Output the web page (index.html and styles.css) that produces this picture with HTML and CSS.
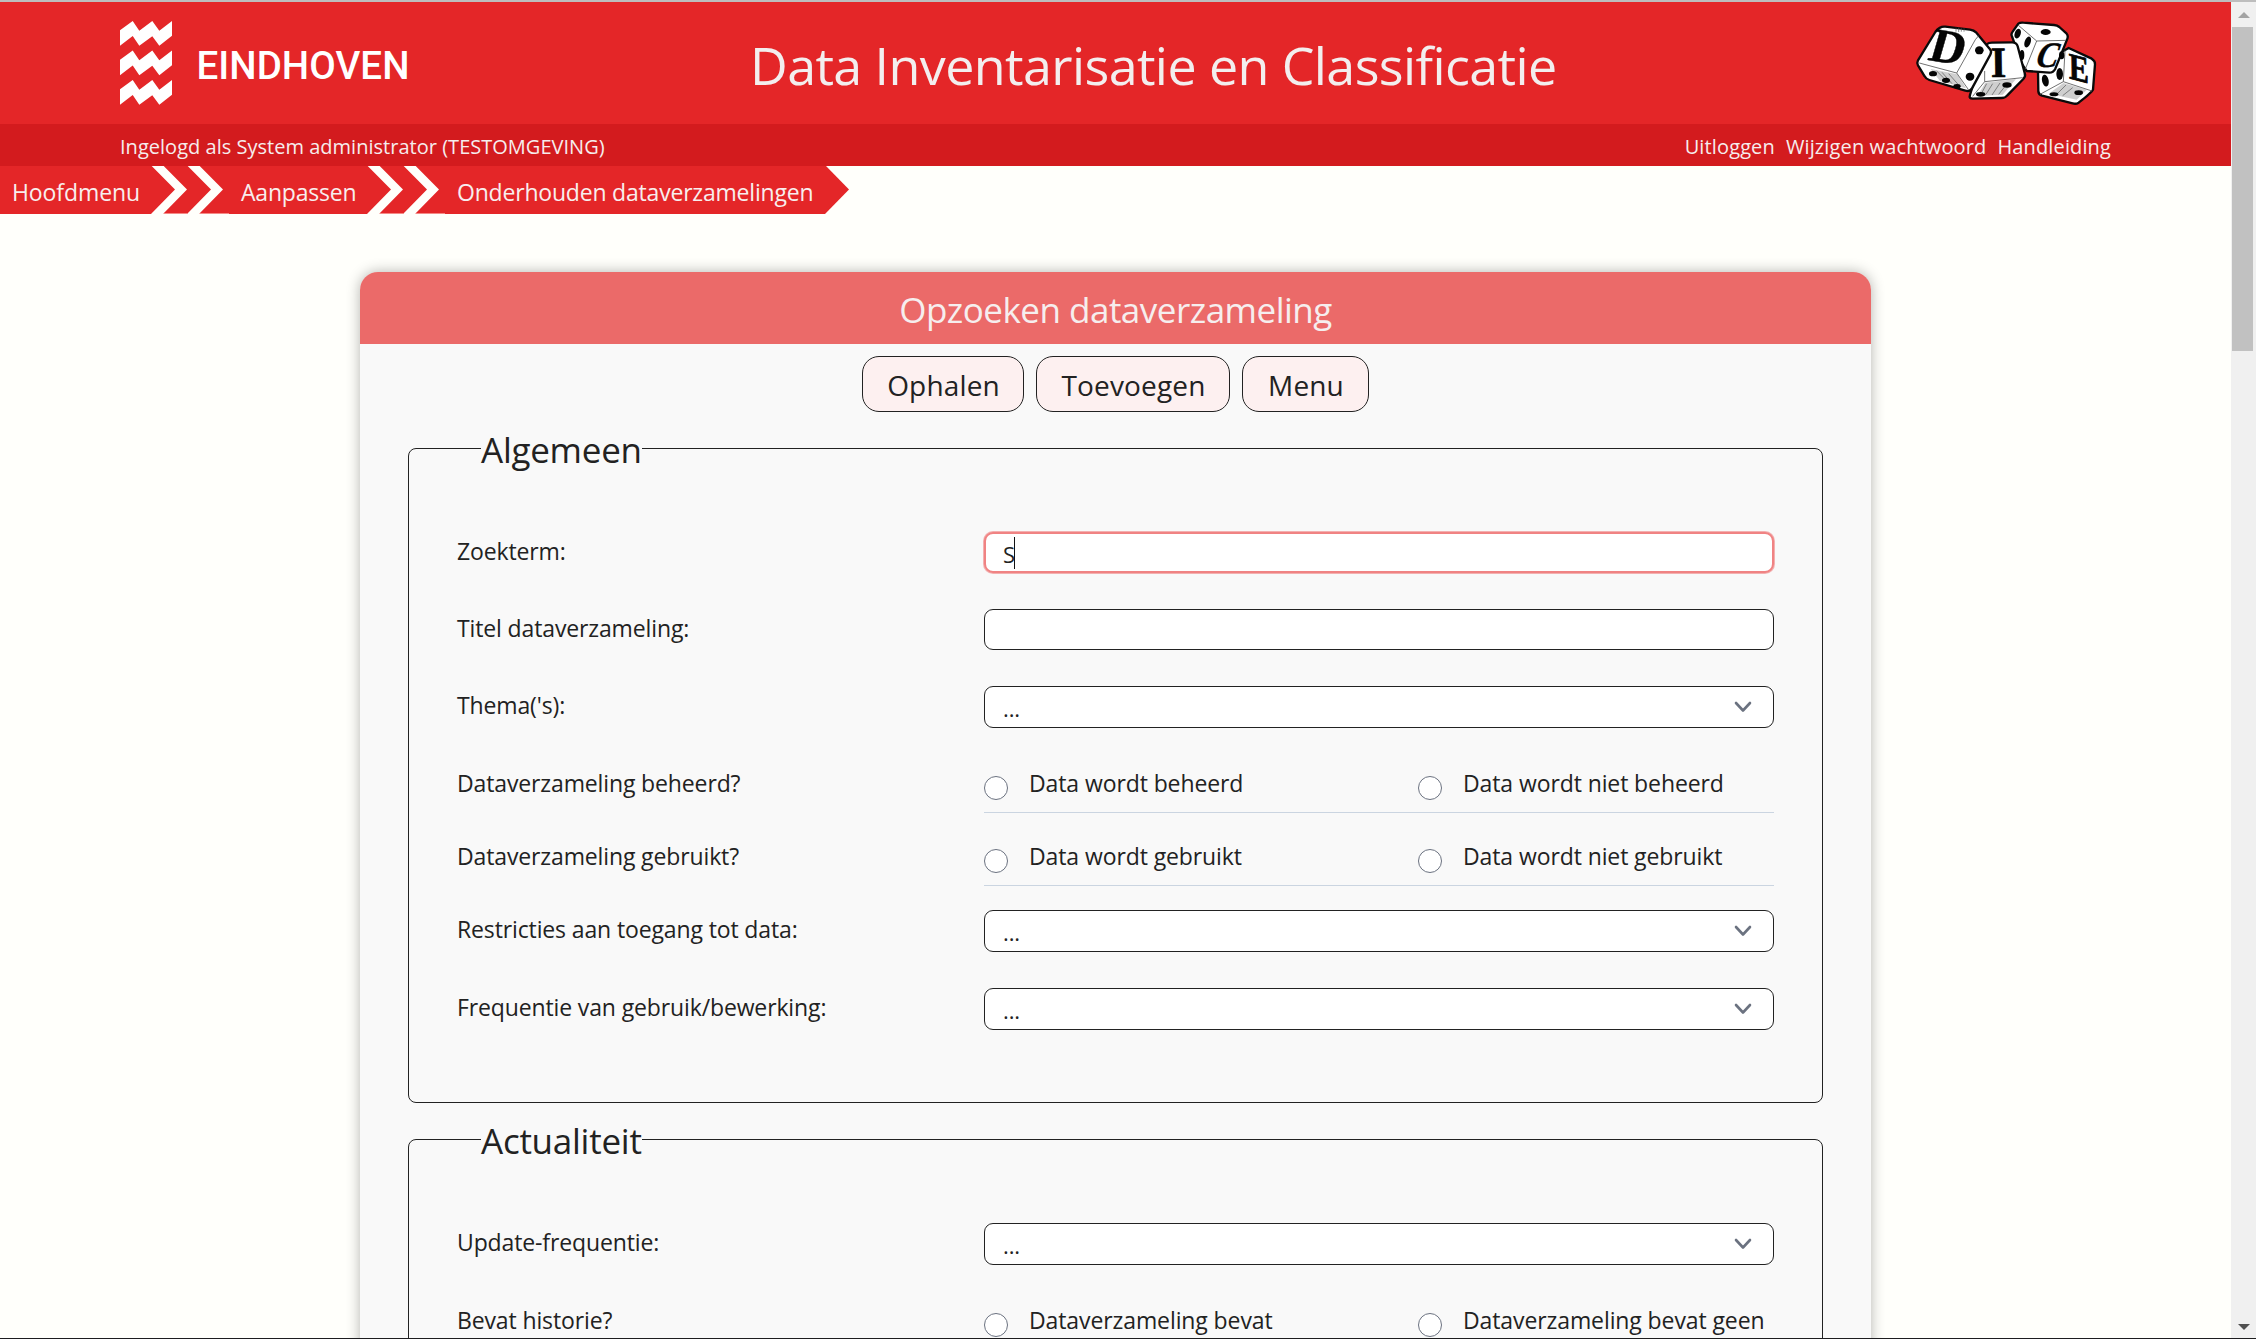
FILE: index.html
```
<!DOCTYPE html>
<html lang="nl">
<head>
<meta charset="utf-8">
<title>Data Inventarisatie en Classificatie</title>
<link rel="stylesheet" href="styles.css">
</head>
<body>
<div class="viewport">
  <div class="page">
    <header class="banner">
      <svg class="logo" width="310" height="122" viewBox="0 2 310 122">
        <defs><path id="wave" d="M0 30.3 12.7 21 19.3 30.7 32.3 21 39.3 30.7 52 21V35.700L39.300 45.700 32.300 36.300 19.300 45.700 12.700 36 0 45.700z"/></defs>
        <g fill="#fff">
          <use href="#wave"/><use href="#wave" y="29.500"/><use href="#wave" y="59"/>
          <text x="76.500" y="79.300" class="logo-text" textLength="213" lengthAdjust="spacing">EINDHOVEN</text>
        </g>
      </svg>
      <h1 class="title">Data Inventarisatie en Classificatie</h1>
      <svg class="dice" width="194" height="94" viewBox="60 50 582 282" stroke-linejoin="round">
        <g fill="#fff" stroke="#0a0a0a" stroke-width="7">
          <path d="M536 143 605 175Q616 182 615 192L609 268Q606 276 566 307 558 312 548 309L456 286Q446 283 445 274L444 215 505 160z"/>
          <path d="M385 70Q390 66 400 67L492 74Q502 75 508 80L530 100Q536 107 531 118L496 205Q490 217 478 217L410 212 395 190 366 108Q362 102 368 94z"/>
          <path d="M290 132Q296 127 306 127L366 126Q380 126 383 138L404 218Q408 228 400 236L352 285Q346 293 334 293L248 295Q236 295 240 284L262 210z"/>
          <path d="M150 82Q156 78 166 79L240 88Q252 90 258 96L300 147Q306 154 301 163L246 264Q240 275 226 271L118 239Q108 236 104 228L84 195Q80 188 84 180L136 95Q142 86 150 82z"/>
        </g>
        <g fill="#cfcfcf">
          <path d="M122 206 202 222 228 264 150 242z"/><path d="M286 247 378 236 338 283 262 287z"/><path d="M520 248 590 268 560 298 476 280z"/>
        </g>
        <g fill="none" stroke="#555" stroke-width="2.500">
          <path d="M88 188 200 218 234 266M200 218 256 118"/>
          <path d="M256 118 266 106M248 288 284 244 398 232M284 244V212"/>
          <path d="M384 74 440 122 528 120M440 122 406 206"/>
          <path d="M525 150 520 244 606 272M520 244 450 282"/>
          <path d="M198 82v12M206 82v13M214 84v10M222 84v10M140 212l34 34M156 216l30 34M176 220l30 34M290 250l-16 30M308 250l-20 32M330 248l-24 36M350 252l-24 30M528 254l-26 26M548 262l-30 24" stroke-width="2"/>
        </g>
        <g fill="#050505">
          <ellipse cx="268" cy="150" rx="13" ry="12"/><ellipse cx="240" cy="229" rx="13" ry="12"/>
          <ellipse cx="129" cy="220" rx="12" ry="8"/><ellipse cx="168" cy="240" rx="12" ry="8"/><ellipse cx="201" cy="258" rx="11" ry="7"/>
          <ellipse cx="272" cy="282" rx="14" ry="7"/><ellipse cx="351" cy="254" rx="14" ry="8"/>
          <ellipse cx="467" cy="95" rx="15" ry="9"/><ellipse cx="383" cy="100" rx="9" ry="15" transform="rotate(20 383 100)"/><ellipse cx="413" cy="125" rx="9" ry="17" transform="rotate(20 413 125)"/><ellipse cx="396" cy="164" rx="7" ry="15"/>
          <ellipse cx="466" cy="241" rx="10" ry="18" transform="rotate(-12 466 241)"/><ellipse cx="509" cy="221" rx="10" ry="18"/><ellipse cx="515" cy="165" rx="8" ry="12"/>
          <ellipse cx="492" cy="282" rx="13" ry="6"/><ellipse cx="566" cy="277" rx="13" ry="7"/>
        </g>
        <g class="dice-letter" fill="#050505" stroke="#050505">
          <text transform="matrix(1.280 .2 -.36 1.250 110 178)" font-size="112">D</text>
          <text transform="matrix(1 0 .02 1.100 303 230)" font-size="118" stroke-width="2">I</text>
          <text transform="matrix(1 0 -.38 1.120 430 200)" font-size="96">C</text>
          <text transform="matrix(.92 .24 .02 1.150 537 234)" font-size="98" stroke-width="2">E</text>
        </g>
      </svg>
    </header>
    <div class="userbar">
      <span class="user">Ingelogd als System administrator (TESTOMGEVING)</span>
      <nav class="links"><a>Uitloggen</a><a>Wijzigen wachtwoord</a><a>Handleiding</a></nav>
    </div>
    <nav class="crumbs">
      <a class="crumb first">Hoofdmenu</a>
      <svg class="sep" width="78" height="48" viewBox="0 0 78 48"><path fill="#e42628" d="M0 0h78v48H0z"/><path fill="#f58a86" d="M12 47h24v1H12zM48 47h30v1H48z"/><path id="chev" fill="#fffffb" d="M.7 0h12L36 23.500 12 48H0L24 23.500z"/><use href="#chev" x="36"/></svg>
      <a class="crumb second">Aanpassen</a>
      <svg class="sep" width="78" height="48" viewBox="0 0 78 48"><path fill="#e42628" d="M0 0h78v48H0z"/><path fill="#f58a86" d="M12 47h24v1H12zM48 47h30v1H48z"/><use href="#chev"/><use href="#chev" x="36"/></svg>
      <a class="crumb third">Onderhouden dataverzamelingen</a>
      <svg class="sep" width="24" height="48" viewBox="0 0 24 48"><path fill="#e42628" d="M0 0h1L24 23.500 0 48z"/></svg>
    </nav>

    <main class="card">
      <h2 class="card-head">Opzoeken dataverzameling</h2>
      <div class="buttons">
        <button class="btn b1">Ophalen</button><button class="btn b2">Toevoegen</button><button class="btn b3">Menu</button>
      </div>
      <fieldset class="group general">
        <legend>Algemeen</legend>
        <div class="row"><label>Zoekterm:</label><div class="field focus">S<i class="caret"></i></div></div>
        <div class="row"><label>Titel dataverzameling:</label><div class="field"></div></div>
        <div class="row"><label>Thema('s):</label><div class="field select">...<svg width="18" height="12" viewBox="0 0 18 12"><path d="M2 2l7 7.500L16 2"/></svg></div></div>
        <div class="row radios"><label>Dataverzameling beheerd?</label><div class="options"><span class="opt"><i class="dot"></i>Data wordt beheerd</span><span class="opt"><i class="dot"></i>Data wordt niet beheerd</span></div></div>
        <div class="row radios"><label>Dataverzameling gebruikt?</label><div class="options"><span class="opt"><i class="dot"></i>Data wordt gebruikt</span><span class="opt"><i class="dot"></i>Data wordt niet gebruikt</span></div></div>
        <div class="row after"><label>Restricties aan toegang tot data:</label><div class="field select">...<svg width="18" height="12" viewBox="0 0 18 12"><path d="M2 2l7 7.500L16 2"/></svg></div></div>
        <div class="row"><label>Frequentie van gebruik/bewerking:</label><div class="field select">...<svg width="18" height="12" viewBox="0 0 18 12"><path d="M2 2l7 7.500L16 2"/></svg></div></div>
      </fieldset>
      <fieldset class="group actual">
        <legend>Actualiteit</legend>
        <div class="row"><label>Update-frequentie:</label><div class="field select">...<svg width="18" height="12" viewBox="0 0 18 12"><path d="M2 2l7 7.500L16 2"/></svg></div></div>
        <div class="row radios"><label>Bevat historie?</label><div class="options"><span class="opt"><i class="dot"></i>Dataverzameling bevat</span><span class="opt"><i class="dot"></i>Dataverzameling bevat geen</span></div></div>
      </fieldset>
    </main>
  </div>
  <div class="scrollbar">
    <svg width="12" height="6" viewBox="0 0 12 6"><path fill="#a3a3a3" d="M6 0l6 6H0z"/></svg>
    <div class="thumb"></div>
    <svg class="down" width="12" height="6" viewBox="0 0 12 6"><path fill="#505050" d="M0 0h12L6 6z"/></svg>
  </div>
</div>
</body>
</html>
```
FILE: styles.css
```
* { box-sizing: border-box; }
body { margin: 0; background: #fffffb; color: #222; font-family: "Open Sans", "Noto Sans", sans-serif; font-size: 23px; }
.viewport { display: flex; height: 1339px; overflow: hidden; border-top: 2px solid #bdbdbd; border-bottom: 1px solid #1d1d1f; }
.page { width: 2231px; height: 1336px; overflow: hidden; }

.banner { display: flex; height: 122px; background: #e42628; color: #f3eeee; padding-left: 120px; }
.logo { flex: none; }
.logo-text { font-family: Roboto, sans-serif; font-weight: 500; font-size: 38.500px; }
.title { margin: 2px 0 0 320px; width: 827px; font-size: 52px; font-weight: 400; letter-spacing: -.6px; line-height: 122px; white-space: nowrap; }
.dice { margin: 15px 0 0 333px; flex: none; }
.dice-letter { font-family: "Liberation Serif", serif; font-weight: 700; }

.userbar { display: flex; justify-content: space-between; height: 42px; padding: 3px 120px 0 120px; background: #d31b1e; color: #f6eded; font-size: 20px; line-height: 40px; }
.user { letter-spacing: .02px; }
.links { display: flex; gap: 11px; letter-spacing: .13px; }

.crumbs { display: flex; height: 48px; color: #f8eeee; line-height: 46px; }
.crumb { background: #e42628; padding-top: 3px; letter-spacing: -.2px; white-space: nowrap; }
.first { width: 151px; padding-left: 12px; letter-spacing: -.1px; }
.second { width: 138px; padding-left: 12px; }
.third { width: 380px; padding-left: 12px; }
.sep { display: block; flex: none; }

.card { width: 1511px; height: 1200px; margin: 58px 0 0 360px; background: #f9f9f9; border-radius: 18px 18px 0 0; box-shadow: 0 0 14px rgba(0, 0, 0, .3); }
.card-head { height: 72px; margin: 0; padding-top: 3px; border-radius: 18px 18px 0 0; background: #eb6a69; color: #f6eeee; text-align: center; font-size: 35px; font-weight: 400; line-height: 69px; letter-spacing: -.5px; }
.buttons { display: flex; justify-content: center; gap: 12px; margin-top: 12px; }
.btn { height: 56px; padding: 2px 0 0 1px; border: 1px solid #222; border-radius: 17px; background: #fdf0f0; color: #222; font: 28px/50px "Open Sans", sans-serif; letter-spacing: .15px; }
.b1 { width: 162px; }
.b2 { width: 194px; }
.b3 { width: 127px; }

.group { margin: 0 48px; padding: 0; border: 1px solid #222; border-radius: 8px; }
.general { height: 678px; margin-top: 13px; }
.actual { height: 400px; margin-top: 13px; }
legend { margin-left: 72px; padding: 0; height: 46px; line-height: 50px; font-size: 35px; letter-spacing: -.25px; }

.row { display: grid; grid-template-columns: 527px 790px; margin: 36px 0 0 48px; line-height: 38px; letter-spacing: -.13px; }
legend + .row { margin-top: 61px; }
.field { display: flex; align-items: center; justify-content: space-between; height: 41px; padding: 3px 21px 0 18px; border: 1px solid #222; border-radius: 9px; background: #fff; font-size: 22px; }
.select { height: 42px; padding-top: 1px; }
.select svg { margin-bottom: 1px; fill: none; stroke: #6b7280; stroke-width: 2.600; stroke-linecap: round; stroke-linejoin: round; }
.focus { justify-content: flex-start; border: 2px solid #f08383; box-shadow: 0 0 0 1px #f3b0b0; padding-left: 17px; }
.caret { width: 1px; height: 32px; margin: -2px 0 0 -1px; background: #111; }

.radios { margin-top: 12px; }
.radios + .radios { margin-top: 0; }
.radios + .after { margin-top: 24px; }
.radios label { padding-top: 24px; }
.options { display: grid; grid-template-columns: 434px 1fr; height: 73px; padding-top: 24px; border-bottom: 1px solid #cbd5e1; letter-spacing: -.1px; white-space: nowrap; }
.opt { display: flex; align-items: flex-start; }
.dot { flex: none; width: 24px; height: 24px; margin: 12px 21px 0 0; border: 1px solid #6b7280; border-radius: 50%; background: #fff; }

.scrollbar { display: flex; flex-direction: column; align-items: center; width: 25px; height: 1336px; padding: 10px 0 8px; background: #f0f0f0; }
.thumb { width: 21px; height: 324px; margin: 9px 2px 0 0; background: #c1c1c1; }
.down { margin-top: auto; }
```
